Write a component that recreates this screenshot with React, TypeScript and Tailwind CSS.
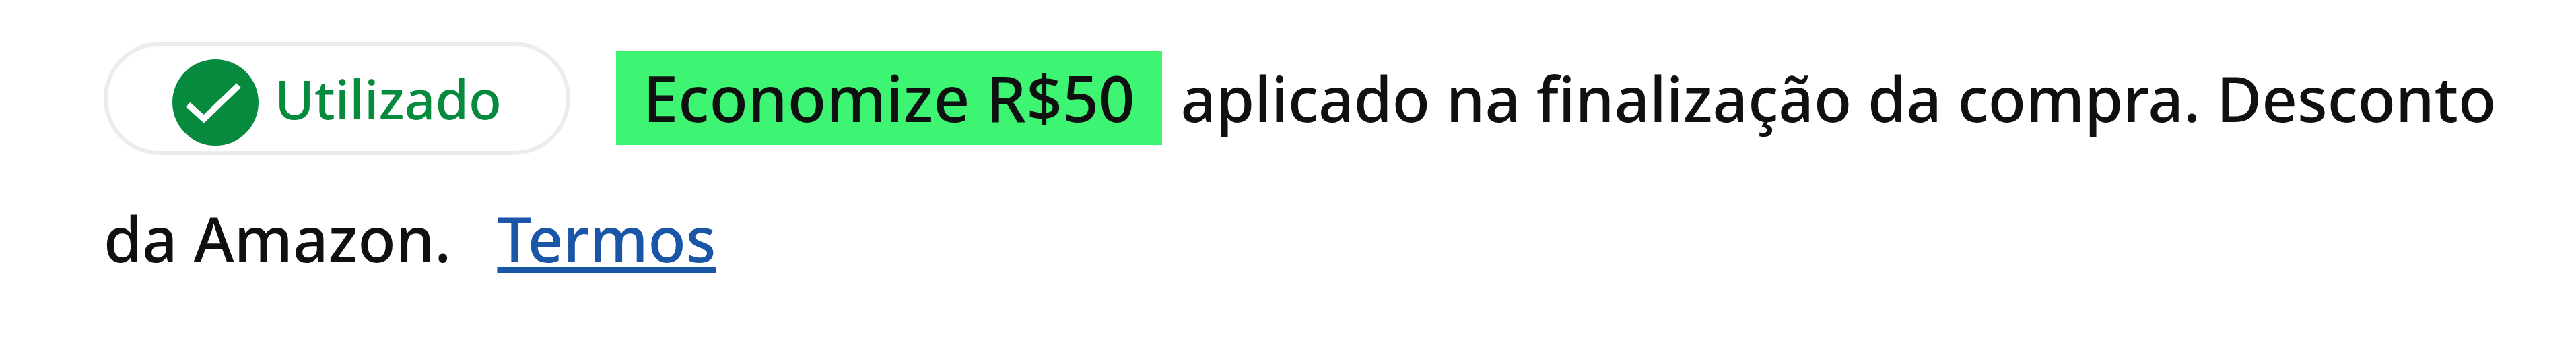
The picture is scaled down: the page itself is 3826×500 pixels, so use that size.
function CheckBadge() {
  return (
    <svg viewBox="0 0 126 126" className="w-32 h-32 mt-3 shrink-0" aria-hidden="true">
      <circle cx="63" cy="63" r="63" fill="#058a3e" />
      <path d="M23 66 L46 87 L97 38" fill="none" stroke="#fff" strokeWidth="9" />
    </svg>
  );
}

export default function App() {
  return (
    <main className="bg-white pt-[42px] pl-[154px] pr-20 font-['Noto_Sans',sans-serif] text-[#0f1111]">
      <p className="text-[92px] font-medium leading-[208px]">
        <span className="inline-flex items-center gap-6 h-42 px-24 mb-5 mr-17 border-6 border-[#e9eded] rounded-full align-middle text-[80px] font-medium leading-none text-[#058a3e]">
          <CheckBadge />
          Utilizado
        </span>
        <mark className="inline-block h-35 px-10 mr-7 bg-[#3df573] text-[#0f1111] text-[94px] leading-[140px]">
          Economize R$50
        </mark>
        <span>aplicado na finalização da compra. Desconto </span>
        <span>da Amazon.</span>
        <a
          href="#termos"
          className="ml-17 text-[#1a56a8] underline decoration-[9px] underline-offset-[7px]"
        >
          Termos
        </a>
      </p>
    </main>
  );
}
